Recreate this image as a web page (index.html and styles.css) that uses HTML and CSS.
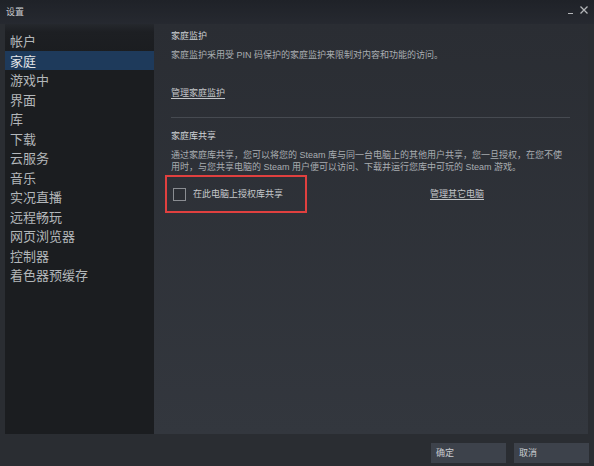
FILE: index.html
```html
<!DOCTYPE html>
<html lang="zh">
<head>
<meta charset="utf-8">
<title>设置</title>
<link rel="stylesheet" href="styles.css">
</head>
<body>
<div class="window">
  <div class="titlebar">
    <span class="title">设置</span>
    <div class="controls">
      <span class="ctl-min"></span>
      <svg class="ctl-close" width="8" height="8" viewBox="0 0 8 8"><path d="M0.5 0.5L7.5 7.5M7.5 0.5L0.5 7.5" stroke="#b4b6b9" stroke-width="1.3"/></svg>
    </div>
  </div>
  <div class="middle">
    <ul class="sidebar">
      <li>帐户</li>
      <li class="active">家庭</li>
      <li>游戏中</li>
      <li>界面</li>
      <li>库</li>
      <li>下载</li>
      <li>云服务</li>
      <li>音乐</li>
      <li>实况直播</li>
      <li>远程畅玩</li>
      <li>网页浏览器</li>
      <li>控制器</li>
      <li>着色器预缓存</li>
    </ul>
    <div class="main">
      <div class="heading">家庭监护</div>
      <div class="desc desc1">家庭监护采用受 PIN 码保护的家庭监护来限制对内容和功能的访问。</div>
      <div class="link link1">管理家庭监护</div>
      <div class="divider"></div>
      <div class="heading heading2">家庭库共享</div>
      <div class="desc desc2">通过家庭库共享，您可以将您的 Steam 库与同一台电脑上的其他用户共享，您一旦授权，在您不使<br>用时，与您共享电脑的 Steam 用户便可以访问、下载并运行您库中可玩的 Steam 游戏。</div>
      <div class="share-row">
        <div class="highlight">
          <span class="checkbox"></span>
          <span class="check-label">在此电脑上授权库共享</span>
        </div>
        <div class="link link2">管理其它电脑</div>
      </div>
    </div>
  </div>
  <div class="footer">
    <button class="btn">确定</button>
    <button class="btn">取消</button>
  </div>
</div>
</body>
</html>
```
FILE: styles.css
```css
html, body {
  margin: 0;
  padding: 0;
}
body {
  width: 594px;
  height: 466px;
  overflow: hidden;
  background: #2a2d32;
  font-family: "Liberation Sans", "Noto Sans CJK SC", sans-serif;
}
.window {
  width: 594px;
  height: 466px;
  display: flex;
  flex-direction: column;
}
.titlebar {
  height: 24px;
  flex: none;
  display: flex;
  align-items: center;
  justify-content: space-between;
  padding: 0 6px 0 6px;
  box-sizing: border-box;
  background: linear-gradient(#1f2228, #262930);
}
.title {
  font-size: 9px;
  line-height: 12px;
  color: #c9cbce;
  margin-top: -1px;
}
.controls {
  display: flex;
  align-items: flex-end;
  gap: 7px;
  margin-top: -4px;
}
.ctl-min {
  display: block;
  width: 5px;
  height: 1.3px;
  background: #b4b6b9;
  margin-bottom: 0;
}
.ctl-close {
  display: block;
}
.middle {
  height: 410px;
  flex: none;
  display: flex;
  padding: 0 6px 0 5px;
}
.sidebar {
  list-style: none;
  margin: 0;
  padding: 7px 0 0 0;
  width: 149px;
  flex: none;
  background: linear-gradient(#25282d 0, #1d1f23 8px, #1b1d20 30px, #1b1d20);
}
.sidebar li {
  font-family: "Noto Sans CJK SC", sans-serif;
  font-size: 13px;
  line-height: 19.5px;
  height: 19.5px;
  padding-left: 5px;
  color: #b3b7ba;
}
.sidebar li.active {
  background: #1e3a5b;
  color: #e1e4e7;
}
.main {
  flex: 1;
  padding: 6px 18px 0 17px;
  background: linear-gradient(#2a2d33, #33373e);
}
.heading {
  font-size: 9px;
  line-height: 12px;
  color: #cdd0d3;
}
.desc {
  font-size: 9px;
  line-height: 12px;
  color: #a9adb1;
  white-space: nowrap;
}
.desc1 {
  margin-top: 7px;
}
.link {
  font-size: 9px;
  line-height: 12px;
  color: #c3c6c9;
  text-decoration: underline;
  text-underline-offset: 2px;
}
.link1 {
  margin-top: 26px;
}
.divider {
  height: 1px;
  background: #464a51;
  margin-top: 18px;
}
.heading2 {
  margin-top: 12px;
}
.desc2 {
  margin-top: 7px;
}
.share-row {
  display: flex;
  align-items: center;
  margin-top: 2px;
}
.highlight {
  display: flex;
  align-items: center;
  width: 142px;
  height: 38px;
  box-sizing: border-box;
  border: 2px solid #e0403f;
  margin-left: -6px;
  padding-left: 6px;
}
.checkbox {
  display: block;
  width: 13px;
  height: 13px;
  box-sizing: border-box;
  border: 1px solid #8a8d92;
  background: #2b2e34;
  flex: none;
}
.check-label {
  font-size: 9px;
  line-height: 12px;
  color: #c6c9cc;
  margin-left: 7px;
}
.link2 {
  margin-left: 123px;
}
.footer {
  flex: 1;
  display: flex;
  justify-content: flex-end;
  align-items: flex-start;
  gap: 8px;
  padding: 9px 5px 0 0;
}
.btn {
  width: 75px;
  height: 20px;
  border: none;
  margin: 0;
  padding: 0 0 0 5px;
  text-align: left;
  background: #3d424b;
  color: #c9ccd0;
  font-family: "Liberation Sans", "Noto Sans CJK SC", sans-serif;
  font-size: 9px;
  line-height: 20px;
}
```
